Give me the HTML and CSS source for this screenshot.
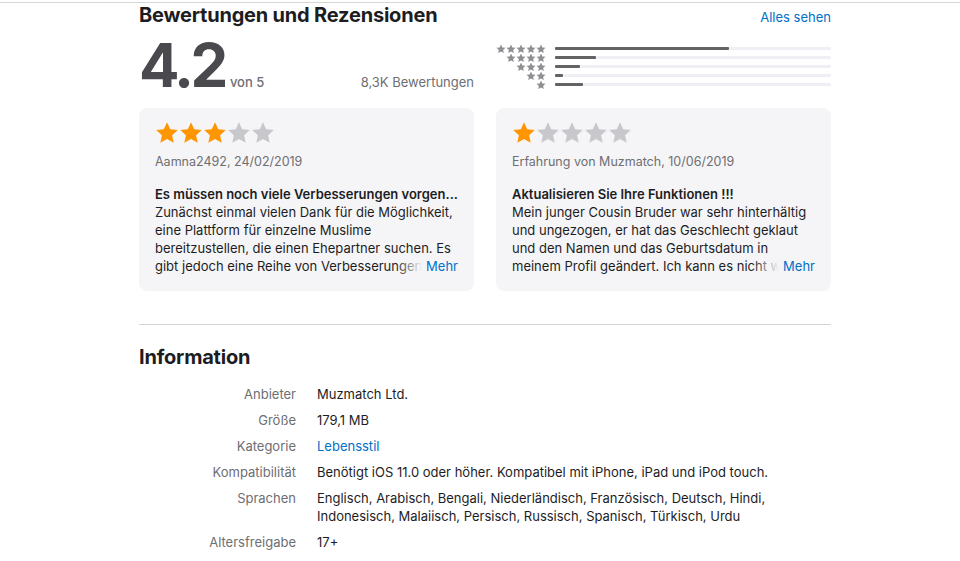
FILE: index.html
```html
<!DOCTYPE html>
<html lang="de">
<head>
<meta charset="utf-8">
<link rel="stylesheet" href="styles.css">
</head>
<body>
<svg width="0" height="0" class="defs">
  <defs>
    <symbol id="star" viewBox="0 0 24 24">
      <polygon points="12,1.2 15.2,8.2 22.8,9 17.1,14.2 18.7,21.8 12,18 5.3,21.8 6.9,14.2 1.2,9 8.8,8.2"/>
    </symbol>
  </defs>
</svg>
<div class="topline"></div>
<main class="page">
  <section class="ratings">
    <div class="section-head">
      <h2 class="section-title">Bewertungen und Rezensionen</h2>
      <a class="link see-all" href="#">Alles sehen</a>
    </div>
    <div class="summary">
      <div class="score">
        <span class="score-num">4.2</span>
        <span class="score-of">von 5</span>
        <span class="score-count">8,3K Bewertungen</span>
      </div>
      <div class="histogram">
        <div class="hist-row"><span class="mini-stars"><svg><use href="#star"/></svg><svg><use href="#star"/></svg><svg><use href="#star"/></svg><svg><use href="#star"/></svg><svg><use href="#star"/></svg></span><span class="track"><span class="fill" style="width:63%"></span></span></div>
        <div class="hist-row"><span class="mini-stars"><svg><use href="#star"/></svg><svg><use href="#star"/></svg><svg><use href="#star"/></svg><svg><use href="#star"/></svg></span><span class="track"><span class="fill" style="width:15%"></span></span></div>
        <div class="hist-row"><span class="mini-stars"><svg><use href="#star"/></svg><svg><use href="#star"/></svg><svg><use href="#star"/></svg></span><span class="track"><span class="fill" style="width:9%"></span></span></div>
        <div class="hist-row"><span class="mini-stars"><svg><use href="#star"/></svg><svg><use href="#star"/></svg></span><span class="track"><span class="fill" style="width:3%"></span></span></div>
        <div class="hist-row"><span class="mini-stars"><svg><use href="#star"/></svg></span><span class="track"><span class="fill" style="width:10%"></span></span></div>
      </div>
    </div>
    <div class="reviews">
      <article class="review">
        <div class="stars">
          <svg class="on"><use href="#star"/></svg><svg class="on"><use href="#star"/></svg><svg class="on"><use href="#star"/></svg><svg><use href="#star"/></svg><svg><use href="#star"/></svg>
        </div>
        <div class="review-meta">Aamna2492, 24/02/2019</div>
        <h3 class="review-title">Es müssen noch viele Verbesserungen vorgen...</h3>
        <div class="review-body">
          <p class="review-text">Zunächst einmal vielen Dank für die Möglichkeit, eine Plattform für einzelne Muslime bereitzustellen, die einen Ehepartner suchen. Es gibt jedoch eine Reihe von Verbesserungen, die vorgenommen werden müssen.</p>
          <a class="link more" href="#">Mehr</a>
        </div>
      </article>
      <article class="review">
        <div class="stars">
          <svg class="on"><use href="#star"/></svg><svg><use href="#star"/></svg><svg><use href="#star"/></svg><svg><use href="#star"/></svg><svg><use href="#star"/></svg>
        </div>
        <div class="review-meta">Erfahrung von Muzmatch, 10/06/2019</div>
        <h3 class="review-title">Aktualisieren Sie Ihre Funktionen !!!</h3>
        <div class="review-body">
          <p class="review-text">Mein junger Cousin Bruder war sehr hinterhältig und ungezogen, er hat das Geschlecht geklaut und den Namen und das Geburtsdatum in meinem Profil geändert. Ich kann es nicht wieder ändern.</p>
          <a class="link more" href="#">Mehr</a>
        </div>
      </article>
    </div>
  </section>
  <section class="info">
    <h2 class="section-title">Information</h2>
    <dl class="info-list">
      <div class="info-row"><dt>Anbieter</dt><dd>Muzmatch Ltd.</dd></div>
      <div class="info-row"><dt>Größe</dt><dd>179,1 MB</dd></div>
      <div class="info-row"><dt>Kategorie</dt><dd><a class="link" href="#">Lebensstil</a></dd></div>
      <div class="info-row"><dt>Kompatibilität</dt><dd>Benötigt iOS 11.0 oder höher. Kompatibel mit iPhone, iPad und iPod touch.</dd></div>
      <div class="info-row"><dt>Sprachen</dt><dd>Englisch, Arabisch, Bengali, Niederländisch, Französisch, Deutsch, Hindi, Indonesisch, Malaiisch, Persisch, Russisch, Spanisch, Türkisch, Urdu</dd></div>
      <div class="info-row"><dt>Altersfreigabe</dt><dd>17+</dd></div>
    </dl>
  </section>
</main>
</body>
</html>
```
FILE: styles.css
```css
* { box-sizing: border-box; }
html, body { margin: 0; padding: 0; background: #fff; }
body {
  font-family: Inter, "Noto Sans", "Liberation Sans", sans-serif;
  font-size: 13px;
  line-height: 18px;
  color: #1d1d1f;
}
.defs { position: absolute; width: 0; height: 0; }
.topline { height: 3px; border-bottom: 1px solid #d6d6d6; }
.page { width: 692px; margin: 0 auto 0 139px; }
.link { color: #0070c9; text-decoration: none; }

.section-head { display: flex; justify-content: space-between; align-items: baseline; }
.section-title { margin: 0; font-size: 20px; line-height: 24px; font-weight: 700; letter-spacing: -0.2px; color: #1d1d1f; }
.see-all { font-size: 13px; }

.summary { display: flex; justify-content: space-between; margin-top: 11px; height: 60px; }
.score { display: flex; align-items: baseline; width: 335px; height: 54px; }
.score-num { font-size: 60px; line-height: 54px; font-weight: 700; letter-spacing: -3.5px; color: #4a4a4e; }
.score-of { margin-left: 5px; font-size: 13px; font-weight: 500; color: #6e6e73; }
.score-count { margin-left: auto; font-size: 13px; color: #6e6e73; }

.histogram { width: 336px; padding-top: 6px; display: flex; flex-direction: column; }
.hist-row { display: flex; align-items: center; height: 9px; }
.mini-stars { width: 51px; display: flex; justify-content: flex-end; }
.mini-stars svg { width: 10px; height: 10px; fill: #8e8e93; margin: -1px 0; }
.track { flex: 1; margin-left: 9px; height: 3px; background: #efeff4; border-radius: 1px; }
.fill { display: block; height: 100%; background: #636366; border-radius: 1px; }

.reviews { display: grid; grid-template-columns: 1fr 1fr; gap: 22px; margin-top: 10px; }
.review { background: #f5f5f7; border-radius: 8px; padding: 13px 16px 20px; height: 183px; }
.stars { display: flex; height: 24px; }
.stars svg { width: 24px; height: 24px; fill: #c7c7cc; }
.stars svg.on { fill: #ff9500; }
.review-meta { margin-top: 8px; color: #6e6e73; font-size: 12.5px; }
.review-title { margin: 14px 0 0; font-size: 13px; line-height: 18px; font-weight: 600; white-space: nowrap; overflow: hidden; }
.review-body { position: relative; }
.review-text { margin: 0; height: 72px; overflow: hidden; }
.more { position: absolute; right: 0; bottom: 0; padding-left: 30px; background: linear-gradient(to right, rgba(245,245,247,0), #f5f5f7 26px); }

.info { margin-top: 33px; border-top: 1px solid #d2d2d7; padding-top: 20px; }
.info-list { margin: 16px 0 0; display: flex; flex-direction: column; gap: 8px; }
.info-row { display: flex; }
.info-row dt { width: 157px; text-align: right; color: #6e6e73; }
.info-row dd { margin: 0 0 0 21px; width: 470px; }
```
